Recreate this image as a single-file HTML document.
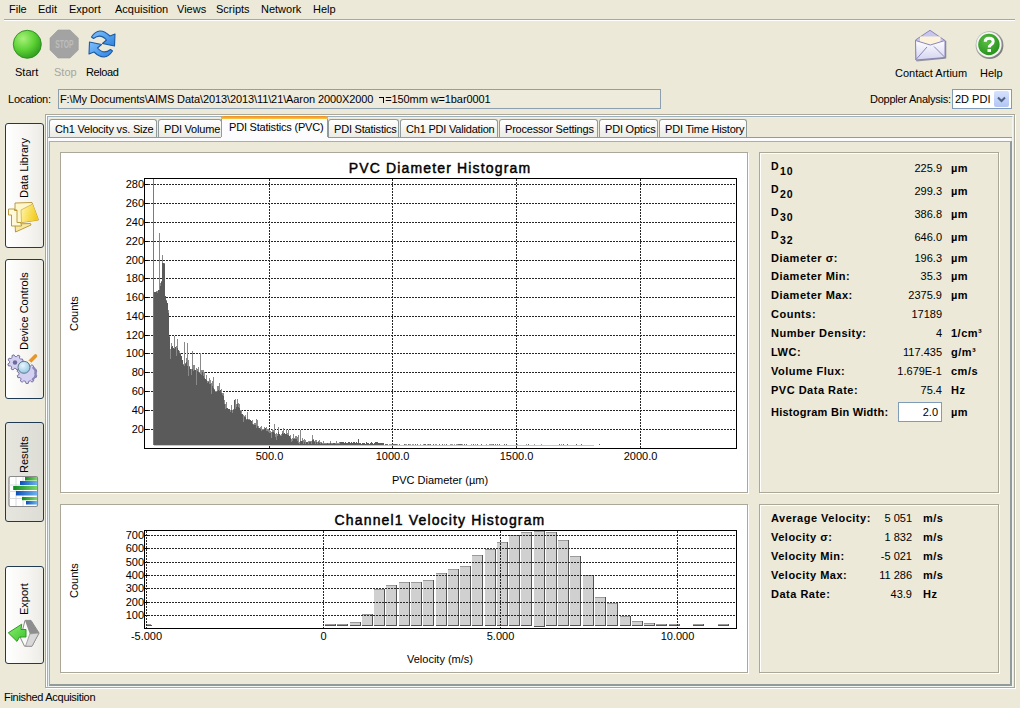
<!DOCTYPE html>
<html><head><meta charset="utf-8">
<style>
*{box-sizing:border-box}
html,body{margin:0;padding:0}
body{width:1020px;height:708px;background:#ECE9D8;position:relative;overflow:hidden;font-family:"Liberation Sans",sans-serif;font-size:11px;color:#000}
.a{position:absolute}
.t{position:absolute;line-height:13px;white-space:pre}
.b{font-weight:bold;letter-spacing:0.5px}
.sb{font-size:10.5px;letter-spacing:0.8px}
.dd{font-size:10.5px}
.ttl{font-size:14px;line-height:16px;letter-spacing:1.15px;-webkit-text-stroke:0.45px #000}
.etch{position:absolute;border:1px solid #ACA899;box-shadow:1px 1px 0 #fff, inset 1px 1px 0 #fff}
.lbtn{position:absolute;left:5px;width:39px;border:1px solid #1F3B53;border-radius:3px;background:linear-gradient(90deg,#FFFFFF 0%,#F6F5F1 60%,#ECEBE4 100%)}
.vt{position:absolute;transform-origin:0 0;transform:rotate(-90deg);white-space:pre;line-height:13px}
.tab{position:absolute;top:119px;height:18px;border:1px solid #919B9C;border-bottom:none;border-radius:3px 3px 0 0;background:linear-gradient(#FFFFFF,#F3F3EF 60%,#ECEBE5);}
.tab span{position:absolute;top:3px;left:5px;white-space:pre;line-height:13px;letter-spacing:-0.2px}
</style></head><body>

<!-- menu -->
<div class="t" style="left:9px;top:3px">File</div>
<div class="t" style="left:38px;top:3px">Edit</div>
<div class="t" style="left:69px;top:3px">Export</div>
<div class="t" style="left:115px;top:3px">Acquisition</div>
<div class="t" style="left:177px;top:3px">Views</div>
<div class="t" style="left:216px;top:3px">Scripts</div>
<div class="t" style="left:261px;top:3px">Network</div>
<div class="t" style="left:313px;top:3px">Help</div>
<div class="a" style="left:4px;top:19px;width:1011px;height:1px;background:#ACA899"></div>
<div class="a" style="left:4px;top:20px;width:1011px;height:1px;background:#fff"></div>

<!-- toolbar -->

<!-- icons -->
<svg class="a" style="left:0;top:0;z-index:5" width="1020" height="708">
<defs>
<radialGradient id="gStart" cx="0.35" cy="0.3" r="0.75"><stop offset="0" stop-color="#A8F07A"/><stop offset="0.55" stop-color="#5CD235"/><stop offset="1" stop-color="#2E9A1E"/></radialGradient>
<linearGradient id="gBlue" x1="0" y1="0" x2="1" y2="1"><stop offset="0" stop-color="#9ED0FF"/><stop offset="1" stop-color="#2F86E0"/></linearGradient>
<linearGradient id="gEnv" x1="0" y1="0" x2="0" y2="1"><stop offset="0" stop-color="#FFFFFF"/><stop offset="1" stop-color="#D4D4F2"/></linearGradient>
<radialGradient id="gHelp" cx="0.4" cy="0.35" r="0.7"><stop offset="0" stop-color="#5CC045"/><stop offset="1" stop-color="#24901A"/></radialGradient>
<linearGradient id="gFold" x1="0" y1="0" x2="1" y2="1"><stop offset="0" stop-color="#FFF6B8"/><stop offset="1" stop-color="#F2C91E"/></linearGradient>
<linearGradient id="gGreenBar" x1="0" y1="0" x2="1" y2="0"><stop offset="0" stop-color="#0E8A1E"/><stop offset="1" stop-color="#7ED66A"/></linearGradient>
<linearGradient id="gBlueBar" x1="0" y1="0" x2="1" y2="0"><stop offset="0" stop-color="#0A4FB8"/><stop offset="1" stop-color="#6EB2F0"/></linearGradient>
<linearGradient id="gArrow" x1="0" y1="0" x2="1" y2="1"><stop offset="0" stop-color="#8AF070"/><stop offset="1" stop-color="#3CC22E"/></linearGradient>
</defs>
<!-- start -->
<circle cx="27.3" cy="44.3" r="14" fill="url(#gStart)" stroke="#2F8A20" stroke-width="0.9"/>
<!-- stop -->
<polygon points="58,30 70,30 78.3,38 78.3,50 70,58 58,58 50,50 50,38" fill="#A3A3A3" stroke="#9C9C9C" stroke-width="0.6"/>
<text x="55.3" y="48.2" font-family="Liberation Sans" font-weight="bold" font-size="10.8" fill="#BDBDBD" textLength="18.3" lengthAdjust="spacingAndGlyphs">STOP</text>
<!-- reload -->
<defs><linearGradient id="gRel" x1="0" y1="0" x2="1" y2="1"><stop offset="0" stop-color="#7EC0FF"/><stop offset="1" stop-color="#2F82DE"/></linearGradient></defs>
<g transform="translate(84,26)" stroke="#1D5AA2" stroke-width="1.1" stroke-linejoin="round" fill="url(#gRel)">
<path d="M7.5,11 Q15,-0.5 26,10 L31,8 L30.5,20 L18.5,17.5 L22.5,14 Q16.5,7 9.5,12.5 Z"/>
<path d="M28.5,25 Q21,36.5 10,26 L5,28 L5.5,16 L17.5,18.5 L13.5,22 Q19.5,29 26.5,23.5 Z"/>
</g>
<!-- envelope -->
<g transform="translate(910,26)">
<path d="M5.5,14 L20,4.3 L35,14.5 L35,31.5 L6,34 Z" fill="#C9C6EE" stroke="#8A87B8" stroke-width="1"/>
<rect x="10" y="10.5" width="20.5" height="9" fill="#FDF3DA"/>
<path d="M5.5,14.5 L20.3,19 L35,14.5 L35,31.5 L6,34 Z" fill="url(#gEnv)" stroke="#8A87B8" stroke-width="1"/>
<path d="M6,33.5 L17,21 M34.5,31 L24,20.5" stroke="#8A87B8" stroke-width="1" fill="none"/>
<path d="M35.8,15 L35.8,32.2 L6.5,35" stroke="#707080" stroke-width="1" fill="none" opacity="0.7"/>
</g>
<!-- help -->
<defs><linearGradient id="gRing" x1="0" y1="0" x2="1" y2="1"><stop offset="0" stop-color="#C8C8C8"/><stop offset="1" stop-color="#6E6E6E"/></linearGradient></defs>
<circle cx="989.5" cy="45.2" r="13.9" fill="url(#gRing)"/>
<circle cx="989" cy="44.7" r="12.6" fill="#F4F4F0"/>
<circle cx="988.9" cy="44.5" r="10.7" fill="url(#gHelp)"/>
<path d="M985.2,41.8 Q985.2,38.3 989.2,38.3 Q993.2,38.3 993.2,41.6 Q993.2,43.6 991,44.8 Q989.2,45.8 989.2,47.6" fill="none" stroke="#fff" stroke-width="3"/><rect x="987.5" y="49" width="3.5" height="2.9" fill="#fff"/>
<!-- data library folders -->
<defs><linearGradient id="gFold2" x1="0" y1="0" x2="1" y2="0.3"><stop offset="0" stop-color="#FFF6B0"/><stop offset="1" stop-color="#F4CC1E"/></linearGradient></defs>
<g transform="translate(4,198)" stroke="#B3902E" stroke-width="0.9" stroke-linejoin="round">
<polygon points="11,26 26.5,25.5 27,27 11.5,34" fill="#F8E9A0"/>
<polygon points="4.5,11 10.5,11 10.5,12.5 14,12.5 17.5,28 7.5,28 7.5,17 4.5,17" fill="#FFF9DC"/>
<polygon points="11,5 28,4.5 34.5,22 17.5,24.5 13,24.5 13,12 11,12" fill="#FFF7CC"/>
<polygon points="17,12 28.5,6 34.5,22 17.5,24.3" fill="url(#gFold2)" stroke="none"/>
<path d="M17,12 L28.5,6 M17,12 L17.5,24.3" fill="none" stroke="#C9A640" stroke-width="0.7"/>
</g>
<!-- device controls gears -->
<g transform="translate(4,350)">
<path d="M17.38,13.69 L18.91,14.94 L17.97,16.86 L16.05,16.41 L14.82,17.50 L15.02,19.46 L12.99,20.16 L11.95,18.48 L10.31,18.38 L9.06,19.91 L7.14,18.97 L7.59,17.05 L6.50,15.82 L4.54,16.02 L3.84,13.99 L5.52,12.95 L5.62,11.31 L4.09,10.06 L5.03,8.14 L6.95,8.59 L8.18,7.50 L7.98,5.54 L10.01,4.84 L11.05,6.52 L12.69,6.62 L13.94,5.09 L15.86,6.03 L15.41,7.95 L16.50,9.18 L18.46,8.98 L19.16,11.01 L17.48,12.05 Z" fill="#D4D0F2" stroke="#77739F" stroke-width="1"/>
<circle cx="11" cy="12.5" r="2.2" fill="#6E6A98"/>
<path d="M30.96,24.30 L32.81,25.43 L32.15,27.52 L29.99,27.39 L28.97,28.82 L29.80,30.83 L28.04,32.14 L26.36,30.76 L24.70,31.32 L24.20,33.43 L22.00,33.45 L21.46,31.35 L19.78,30.82 L18.13,32.24 L16.34,30.96 L17.14,28.94 L16.09,27.53 L13.93,27.71 L13.23,25.63 L15.06,24.46 L15.04,22.70 L13.19,21.57 L13.85,19.48 L16.01,19.61 L17.03,18.18 L16.20,16.17 L17.96,14.86 L19.64,16.24 L21.30,15.68 L21.80,13.57 L24.00,13.55 L24.54,15.65 L26.22,16.18 L27.87,14.76 L29.66,16.04 L28.86,18.06 L29.91,19.47 L32.07,19.29 L32.77,21.37 L30.94,22.54 Z" fill="#D4D0F2" stroke="#77739F" stroke-width="1"/>
<path d="M29,17 A8,8 0 0 1 28,30" fill="none" stroke="#8A86B8" stroke-width="2"/>
<line x1="25" y1="12.5" x2="31.5" y2="6" stroke="#E8962A" stroke-width="3.6" stroke-linecap="round"/>
<line x1="24.5" y1="13" x2="26" y2="11.5" stroke="#F4F4F4" stroke-width="3.6"/>
<defs><radialGradient id="gLens" cx="0.4" cy="0.35" r="0.7"><stop offset="0" stop-color="#EAF6FC"/><stop offset="1" stop-color="#8EC4E4"/></radialGradient></defs>
<circle cx="20" cy="17.3" r="6" fill="url(#gLens)" stroke="#566E7C" stroke-width="0.9"/>
</g>
<!-- results chart icon -->
<g transform="translate(4,472)">
<rect x="5" y="4.5" width="28.5" height="30" rx="1.5" fill="#FFFFFF" stroke="#8A8A8A" stroke-width="1.2"/>
<path d="M12,5 V34 M19,5 V34 M5,13 H33 M5,19.5 H33 M5,26.5 H33" stroke="#D0D0D8" stroke-width="0.8"/>
<rect x="21" y="5" width="12" height="3.5" fill="url(#gGreenBar)"/>
<rect x="16" y="9" width="17" height="4" fill="url(#gBlueBar)"/>
<rect x="9.2" y="14" width="23.8" height="4" fill="url(#gGreenBar)"/>
<rect x="12" y="19" width="21" height="4.5" fill="url(#gBlueBar)"/>
<rect x="18" y="25" width="15" height="3.2" fill="url(#gGreenBar)"/>
<rect x="22" y="29" width="11" height="3.5" fill="url(#gBlueBar)"/>
</g>
<!-- export icon -->
<g transform="translate(4,614)">
<polygon points="21,6.4 27,6.4 35,19 28,32.2 20.5,32.2 16.5,24" fill="#FAFAFA" stroke="#7A7A7A" stroke-width="0.9" stroke-linejoin="round"/>
<polygon points="21,6.4 27,6.4 35,19 25.8,19.9" fill="#8E8E8E"/>
<polygon points="25.8,19.9 35,19 28,32.2 21.5,32.2" fill="#D8D8D8" stroke="#8A8A8A" stroke-width="0.7"/>
<polygon points="4.3,18.8 17.7,10.2 17,15.5 22,15.5 22,23 15.5,23 13,27.4" fill="url(#gArrow)" stroke="#2E9A22" stroke-width="1" stroke-linejoin="round"/>
</g>
</svg>

<div class="t" style="left:15px;top:66px">Start</div>
<div class="t" style="left:54px;top:66px;color:#A7A69E">Stop</div>
<div class="t" style="left:86px;top:66px;letter-spacing:-0.4px">Reload</div>
<div class="t" style="left:895px;top:67px">Contact Artium</div>
<div class="t" style="left:980px;top:67px">Help</div>

<!-- location -->
<div class="t" style="left:8px;top:93px;letter-spacing:-0.2px">Location:</div>
<div class="a" style="left:58px;top:89px;width:603px;height:20px;border:1px solid #8C9FAE;background:#EEEADC"></div>
<div class="t" style="left:60px;top:93px;letter-spacing:-0.1px">F:\My Documents\AIMS Data\2013\2013\11\21\Aaron 2000X2000  <span style="display:inline-block;width:5px;height:6px;border-top:1px solid #000;border-right:1px solid #000;margin-right:1px"></span>=150mm w=1bar0001</div>
<div class="t" style="left:870px;top:93px;letter-spacing:-0.25px">Doppler Analysis:</div>
<div class="a" style="left:952px;top:89px;width:60px;height:20px;border:1px solid #7F9DB9;background:#fff"></div>
<div class="t" style="left:955px;top:93px">2D PDI</div>
<div class="a" style="left:994px;top:91px;width:15px;height:16px;border-radius:2px;background:linear-gradient(#D6E2FD,#B2C6F4)"></div>
<svg class="a" style="left:994px;top:91px" width="15" height="16"><path d="M4,6.5 L7.5,10 L11,6.5" fill="none" stroke="#4D6185" stroke-width="2"/></svg>

<!-- left buttons -->
<div class="lbtn" style="top:123px;height:125px"></div>
<div class="lbtn" style="top:259px;height:140px"></div>
<div class="lbtn" style="top:422px;height:100px;background:linear-gradient(90deg,#E6E5DE,#DEDDD5)"></div>
<div class="lbtn" style="top:566px;height:98px"></div>
<div class="vt" style="left:18px;top:198px">Data Library</div>
<div class="vt" style="left:18px;top:350px">Device Controls</div>
<div class="vt" style="left:18px;top:473px">Results</div>
<div class="vt" style="left:18px;top:615px">Export</div>

<!-- frame -->
<div class="etch" style="left:45px;top:114px;width:970px;height:574px"></div>
<div class="a" style="left:47px;top:116px;width:966px;height:571px;border:1px solid #9CB0BE;border-right-color:#F4F6F2;border-bottom-color:#F4F6F2;box-shadow:inset 1px 1px 0 #E6F0F0"></div>

<!-- tabs -->
<div class="a" style="left:48px;top:137px;width:964px;height:1px;background:#919B9C"></div>
<div class="a" style="left:48px;top:138px;width:963px;height:3px;background:#FCFCFE"></div>
<div class="a" style="left:49px;top:141px;width:963px;height:545px;border:1px solid #9CB0BE;border-right:2px solid #919B9C;border-bottom:2px solid #919B9C;background:#ECE9D8"></div>

<div class="tab" style="left:49px;width:108px"><span>Ch1 Velocity vs. Size</span></div>
<div class="tab" style="left:158px;width:64px"><span>PDI Volume</span></div>
<div class="tab" style="left:328px;width:71px"><span>PDI Statistics</span></div>
<div class="tab" style="left:400px;width:98px"><span>Ch1 PDI Validation</span></div>
<div class="tab" style="left:499px;width:99px"><span>Processor Settings</span></div>
<div class="tab" style="left:599px;width:59px"><span>PDI Optics</span></div>
<div class="tab" style="left:659px;width:88px"><span>PDI Time History</span></div>
<div class="a" style="left:221px;top:116px;width:107px;height:22px;background:#FCFCFE;border:1px solid #919B9C;border-top:none;border-bottom:none;border-radius:3px 3px 0 0"></div>
<div class="a" style="left:221px;top:137px;width:107px;height:4px;background:#FCFCFE"></div>
<div class="a" style="left:221px;top:116px;width:107px;height:3px;background:linear-gradient(#E68B2C,#FFC73C);border-radius:3px 3px 0 0"></div>
<div class="t" style="left:229px;top:121px;letter-spacing:-0.2px">PDI Statistics (PVC)</div>

<!-- panels -->
<div class="etch" style="left:60px;top:152px;width:688px;height:341px;background:#fff"></div>
<div class="etch" style="left:759px;top:152px;width:240px;height:341px"></div>
<div class="etch" style="left:60px;top:504px;width:688px;height:169px;background:#fff"></div>
<div class="etch" style="left:759px;top:504px;width:240px;height:169px"></div>

<!-- stats -->
<div class="t b dd" style="left:771px;top:160px">D</div>
<div class="t b sb" style="left:780px;top:165px">10</div>
<div class="t" style="left:862px;width:80px;text-align:right;top:162px">225.9</div>
<div class="t b" style="left:951px;top:162px">µm</div>
<div class="t b dd" style="left:771px;top:183px">D</div>
<div class="t b sb" style="left:780px;top:188px">20</div>
<div class="t" style="left:862px;width:80px;text-align:right;top:185px">299.3</div>
<div class="t b" style="left:951px;top:185px">µm</div>
<div class="t b dd" style="left:771px;top:206px">D</div>
<div class="t b sb" style="left:780px;top:211px">30</div>
<div class="t" style="left:862px;width:80px;text-align:right;top:208px">386.8</div>
<div class="t b" style="left:951px;top:208px">µm</div>
<div class="t b dd" style="left:771px;top:229px">D</div>
<div class="t b sb" style="left:780px;top:234px">32</div>
<div class="t" style="left:862px;width:80px;text-align:right;top:231px">646.0</div>
<div class="t b" style="left:951px;top:231px">µm</div>
<div class="t b" style="left:771px;top:252px">Diameter σ:</div>
<div class="t" style="left:862px;width:80px;text-align:right;top:252px">196.3</div>
<div class="t b" style="left:951px;top:252px">µm</div>
<div class="t b" style="left:771px;top:270px">Diameter Min:</div>
<div class="t" style="left:862px;width:80px;text-align:right;top:270px">35.3</div>
<div class="t b" style="left:951px;top:270px">µm</div>
<div class="t b" style="left:771px;top:289px">Diameter Max:</div>
<div class="t" style="left:862px;width:80px;text-align:right;top:289px">2375.9</div>
<div class="t b" style="left:951px;top:289px">µm</div>
<div class="t b" style="left:771px;top:308px">Counts:</div>
<div class="t" style="left:862px;width:80px;text-align:right;top:308px">17189</div>
<div class="t b" style="left:771px;top:327px">Number Density:</div>
<div class="t" style="left:862px;width:80px;text-align:right;top:327px">4</div>
<div class="t b" style="left:951px;top:327px">1/cm³</div>
<div class="t b" style="left:771px;top:346px">LWC:</div>
<div class="t" style="left:862px;width:80px;text-align:right;top:346px">117.435</div>
<div class="t b" style="left:951px;top:346px">g/m³</div>
<div class="t b" style="left:771px;top:365px">Volume Flux:</div>
<div class="t" style="left:862px;width:80px;text-align:right;top:365px">1.679E-1</div>
<div class="t b" style="left:951px;top:365px">cm/s</div>
<div class="t b" style="left:771px;top:384px">PVC Data Rate:</div>
<div class="t" style="left:862px;width:80px;text-align:right;top:384px">75.4</div>
<div class="t b" style="left:951px;top:384px">Hz</div>
<div class="t b" style="left:771px;top:406px;letter-spacing:0.25px">Histogram Bin Width:</div>
<div class="a" style="left:898px;top:402px;width:44px;height:20px;border:1px solid #7F9DB9;background:#fff"></div>
<div class="t" style="left:862px;width:76px;text-align:right;top:406px">2.0</div>
<div class="t b" style="left:951px;top:406px">µm</div>
<div class="t b" style="left:771px;top:512px">Average Velocity:</div>
<div class="t" style="left:832px;width:80px;text-align:right;top:512px">5 051</div>
<div class="t b" style="left:923px;top:512px">m/s</div>
<div class="t b" style="left:771px;top:531px">Velocity σ:</div>
<div class="t" style="left:832px;width:80px;text-align:right;top:531px">1 832</div>
<div class="t b" style="left:923px;top:531px">m/s</div>
<div class="t b" style="left:771px;top:550px">Velocity Min:</div>
<div class="t" style="left:832px;width:80px;text-align:right;top:550px">-5 021</div>
<div class="t b" style="left:923px;top:550px">m/s</div>
<div class="t b" style="left:771px;top:569px">Velocity Max:</div>
<div class="t" style="left:832px;width:80px;text-align:right;top:569px">11 286</div>
<div class="t b" style="left:923px;top:569px">m/s</div>
<div class="t b" style="left:771px;top:588px">Data Rate:</div>
<div class="t" style="left:832px;width:80px;text-align:right;top:588px">43.9</div>
<div class="t b" style="left:923px;top:588px">Hz</div>

<!-- charts -->
<svg class="a" style="left:0;top:0" width="1020" height="708" shape-rendering="crispEdges">
<line x1="145" y1="429.5" x2="736" y2="429.5" stroke="#262626" stroke-dasharray="2,1"/>
<line x1="145" y1="429.5" x2="148" y2="429.5" stroke="#000"/>
<line x1="145" y1="410.5" x2="736" y2="410.5" stroke="#262626" stroke-dasharray="2,1"/>
<line x1="145" y1="410.5" x2="148" y2="410.5" stroke="#000"/>
<line x1="145" y1="391.5" x2="736" y2="391.5" stroke="#262626" stroke-dasharray="2,1"/>
<line x1="145" y1="391.5" x2="148" y2="391.5" stroke="#000"/>
<line x1="145" y1="372.5" x2="736" y2="372.5" stroke="#262626" stroke-dasharray="2,1"/>
<line x1="145" y1="372.5" x2="148" y2="372.5" stroke="#000"/>
<line x1="145" y1="353.5" x2="736" y2="353.5" stroke="#262626" stroke-dasharray="2,1"/>
<line x1="145" y1="353.5" x2="148" y2="353.5" stroke="#000"/>
<line x1="145" y1="335.5" x2="736" y2="335.5" stroke="#262626" stroke-dasharray="2,1"/>
<line x1="145" y1="335.5" x2="148" y2="335.5" stroke="#000"/>
<line x1="145" y1="316.5" x2="736" y2="316.5" stroke="#262626" stroke-dasharray="2,1"/>
<line x1="145" y1="316.5" x2="148" y2="316.5" stroke="#000"/>
<line x1="145" y1="297.5" x2="736" y2="297.5" stroke="#262626" stroke-dasharray="2,1"/>
<line x1="145" y1="297.5" x2="148" y2="297.5" stroke="#000"/>
<line x1="145" y1="278.5" x2="736" y2="278.5" stroke="#262626" stroke-dasharray="2,1"/>
<line x1="145" y1="278.5" x2="148" y2="278.5" stroke="#000"/>
<line x1="145" y1="260.5" x2="736" y2="260.5" stroke="#262626" stroke-dasharray="2,1"/>
<line x1="145" y1="260.5" x2="148" y2="260.5" stroke="#000"/>
<line x1="145" y1="241.5" x2="736" y2="241.5" stroke="#262626" stroke-dasharray="2,1"/>
<line x1="145" y1="241.5" x2="148" y2="241.5" stroke="#000"/>
<line x1="145" y1="222.5" x2="736" y2="222.5" stroke="#262626" stroke-dasharray="2,1"/>
<line x1="145" y1="222.5" x2="148" y2="222.5" stroke="#000"/>
<line x1="145" y1="203.5" x2="736" y2="203.5" stroke="#262626" stroke-dasharray="2,1"/>
<line x1="145" y1="203.5" x2="148" y2="203.5" stroke="#000"/>
<line x1="145" y1="184.5" x2="736" y2="184.5" stroke="#262626" stroke-dasharray="2,1"/>
<line x1="145" y1="184.5" x2="148" y2="184.5" stroke="#000"/>
<line x1="269.5" y1="179" x2="269.5" y2="448" stroke="#262626" stroke-dasharray="2,1"/>
<line x1="392.5" y1="179" x2="392.5" y2="448" stroke="#262626" stroke-dasharray="2,1"/>
<line x1="516.5" y1="179" x2="516.5" y2="448" stroke="#262626" stroke-dasharray="2,1"/>
<line x1="640.5" y1="179" x2="640.5" y2="448" stroke="#262626" stroke-dasharray="2,1"/>
<rect x="153" y="179" width="1" height="266" fill="#7A7A7A"/>
<rect x="154" y="292" width="1" height="153" fill="#5A5A5A"/>
<rect x="155" y="292" width="1" height="153" fill="#5A5A5A"/>
<rect x="156" y="291" width="1" height="1" fill="#8A8A8A"/>
<rect x="156" y="292" width="1" height="153" fill="#5A5A5A"/>
<rect x="157" y="291" width="1" height="2" fill="#8A8A8A"/>
<rect x="157" y="293" width="1" height="152" fill="#5A5A5A"/>
<rect x="158" y="290" width="1" height="155" fill="#5A5A5A"/>
<rect x="159" y="233" width="1" height="57" fill="#8A8A8A"/>
<rect x="159" y="290" width="1" height="155" fill="#5A5A5A"/>
<rect x="160" y="283" width="1" height="3" fill="#8A8A8A"/>
<rect x="160" y="286" width="1" height="159" fill="#5A5A5A"/>
<rect x="161" y="281" width="1" height="1" fill="#8A8A8A"/>
<rect x="161" y="282" width="1" height="163" fill="#5A5A5A"/>
<rect x="162" y="255" width="1" height="8" fill="#8A8A8A"/>
<rect x="162" y="263" width="1" height="182" fill="#5A5A5A"/>
<rect x="163" y="263" width="1" height="182" fill="#5A5A5A"/>
<rect x="164" y="263" width="1" height="1" fill="#8A8A8A"/>
<rect x="164" y="264" width="1" height="181" fill="#5A5A5A"/>
<rect x="165" y="296" width="1" height="149" fill="#5A5A5A"/>
<rect x="166" y="300" width="1" height="1" fill="#8A8A8A"/>
<rect x="166" y="301" width="1" height="144" fill="#5A5A5A"/>
<rect x="167" y="303" width="1" height="142" fill="#5A5A5A"/>
<rect x="168" y="310" width="1" height="3" fill="#8A8A8A"/>
<rect x="168" y="313" width="1" height="132" fill="#5A5A5A"/>
<rect x="169" y="336" width="1" height="1" fill="#8A8A8A"/>
<rect x="169" y="337" width="1" height="108" fill="#5A5A5A"/>
<rect x="170" y="349" width="1" height="10" fill="#8A8A8A"/>
<rect x="170" y="359" width="1" height="86" fill="#5A5A5A"/>
<rect x="171" y="343" width="1" height="4" fill="#8A8A8A"/>
<rect x="171" y="347" width="1" height="98" fill="#5A5A5A"/>
<rect x="172" y="346" width="1" height="99" fill="#5A5A5A"/>
<rect x="173" y="348" width="1" height="97" fill="#5A5A5A"/>
<rect x="174" y="336" width="1" height="13" fill="#8A8A8A"/>
<rect x="174" y="349" width="1" height="96" fill="#5A5A5A"/>
<rect x="175" y="347" width="1" height="98" fill="#5A5A5A"/>
<rect x="176" y="346" width="1" height="10" fill="#8A8A8A"/>
<rect x="176" y="356" width="1" height="89" fill="#5A5A5A"/>
<rect x="177" y="339" width="1" height="9" fill="#8A8A8A"/>
<rect x="177" y="348" width="1" height="97" fill="#5A5A5A"/>
<rect x="178" y="350" width="1" height="95" fill="#5A5A5A"/>
<rect x="179" y="351" width="1" height="2" fill="#8A8A8A"/>
<rect x="179" y="353" width="1" height="92" fill="#5A5A5A"/>
<rect x="180" y="353" width="1" height="1" fill="#8A8A8A"/>
<rect x="180" y="354" width="1" height="91" fill="#5A5A5A"/>
<rect x="181" y="356" width="1" height="89" fill="#5A5A5A"/>
<rect x="182" y="360" width="1" height="85" fill="#5A5A5A"/>
<rect x="183" y="364" width="1" height="1" fill="#8A8A8A"/>
<rect x="183" y="365" width="1" height="80" fill="#5A5A5A"/>
<rect x="184" y="342" width="1" height="24" fill="#8A8A8A"/>
<rect x="184" y="366" width="1" height="79" fill="#5A5A5A"/>
<rect x="185" y="363" width="1" height="1" fill="#8A8A8A"/>
<rect x="185" y="364" width="1" height="81" fill="#5A5A5A"/>
<rect x="186" y="358" width="1" height="4" fill="#8A8A8A"/>
<rect x="186" y="362" width="1" height="83" fill="#5A5A5A"/>
<rect x="187" y="343" width="1" height="23" fill="#8A8A8A"/>
<rect x="187" y="366" width="1" height="79" fill="#5A5A5A"/>
<rect x="188" y="360" width="1" height="16" fill="#8A8A8A"/>
<rect x="188" y="376" width="1" height="69" fill="#5A5A5A"/>
<rect x="189" y="366" width="1" height="1" fill="#8A8A8A"/>
<rect x="189" y="367" width="1" height="78" fill="#5A5A5A"/>
<rect x="190" y="369" width="1" height="76" fill="#5A5A5A"/>
<rect x="191" y="369" width="1" height="6" fill="#8A8A8A"/>
<rect x="191" y="375" width="1" height="70" fill="#5A5A5A"/>
<rect x="192" y="351" width="1" height="18" fill="#8A8A8A"/>
<rect x="192" y="369" width="1" height="76" fill="#5A5A5A"/>
<rect x="193" y="365" width="1" height="6" fill="#8A8A8A"/>
<rect x="193" y="371" width="1" height="74" fill="#5A5A5A"/>
<rect x="194" y="365" width="1" height="5" fill="#8A8A8A"/>
<rect x="194" y="370" width="1" height="75" fill="#5A5A5A"/>
<rect x="195" y="370" width="1" height="75" fill="#5A5A5A"/>
<rect x="196" y="368" width="1" height="17" fill="#8A8A8A"/>
<rect x="196" y="385" width="1" height="60" fill="#5A5A5A"/>
<rect x="197" y="369" width="1" height="2" fill="#8A8A8A"/>
<rect x="197" y="371" width="1" height="74" fill="#5A5A5A"/>
<rect x="198" y="367" width="1" height="5" fill="#8A8A8A"/>
<rect x="198" y="372" width="1" height="73" fill="#5A5A5A"/>
<rect x="199" y="372" width="1" height="1" fill="#8A8A8A"/>
<rect x="199" y="373" width="1" height="72" fill="#5A5A5A"/>
<rect x="200" y="353" width="1" height="21" fill="#8A8A8A"/>
<rect x="200" y="374" width="1" height="71" fill="#5A5A5A"/>
<rect x="201" y="370" width="1" height="5" fill="#8A8A8A"/>
<rect x="201" y="375" width="1" height="70" fill="#5A5A5A"/>
<rect x="202" y="370" width="1" height="2" fill="#8A8A8A"/>
<rect x="202" y="372" width="1" height="73" fill="#5A5A5A"/>
<rect x="203" y="370" width="1" height="6" fill="#8A8A8A"/>
<rect x="203" y="376" width="1" height="69" fill="#5A5A5A"/>
<rect x="204" y="372" width="1" height="6" fill="#8A8A8A"/>
<rect x="204" y="378" width="1" height="67" fill="#5A5A5A"/>
<rect x="205" y="379" width="1" height="66" fill="#5A5A5A"/>
<rect x="206" y="375" width="1" height="5" fill="#8A8A8A"/>
<rect x="206" y="380" width="1" height="65" fill="#5A5A5A"/>
<rect x="207" y="381" width="1" height="2" fill="#8A8A8A"/>
<rect x="207" y="383" width="1" height="62" fill="#5A5A5A"/>
<rect x="208" y="381" width="1" height="1" fill="#8A8A8A"/>
<rect x="208" y="382" width="1" height="63" fill="#5A5A5A"/>
<rect x="209" y="378" width="1" height="6" fill="#8A8A8A"/>
<rect x="209" y="384" width="1" height="61" fill="#5A5A5A"/>
<rect x="210" y="380" width="1" height="4" fill="#8A8A8A"/>
<rect x="210" y="384" width="1" height="61" fill="#5A5A5A"/>
<rect x="211" y="383" width="1" height="11" fill="#8A8A8A"/>
<rect x="211" y="394" width="1" height="51" fill="#5A5A5A"/>
<rect x="212" y="381" width="1" height="5" fill="#8A8A8A"/>
<rect x="212" y="386" width="1" height="59" fill="#5A5A5A"/>
<rect x="213" y="377" width="1" height="11" fill="#8A8A8A"/>
<rect x="213" y="388" width="1" height="57" fill="#5A5A5A"/>
<rect x="214" y="389" width="1" height="1" fill="#8A8A8A"/>
<rect x="214" y="390" width="1" height="55" fill="#5A5A5A"/>
<rect x="215" y="391" width="1" height="1" fill="#8A8A8A"/>
<rect x="215" y="392" width="1" height="53" fill="#5A5A5A"/>
<rect x="216" y="391" width="1" height="1" fill="#8A8A8A"/>
<rect x="216" y="392" width="1" height="53" fill="#5A5A5A"/>
<rect x="217" y="386" width="1" height="5" fill="#8A8A8A"/>
<rect x="217" y="391" width="1" height="54" fill="#5A5A5A"/>
<rect x="218" y="386" width="1" height="4" fill="#8A8A8A"/>
<rect x="218" y="390" width="1" height="55" fill="#5A5A5A"/>
<rect x="219" y="383" width="1" height="8" fill="#8A8A8A"/>
<rect x="219" y="391" width="1" height="54" fill="#5A5A5A"/>
<rect x="220" y="390" width="1" height="55" fill="#5A5A5A"/>
<rect x="221" y="389" width="1" height="4" fill="#8A8A8A"/>
<rect x="221" y="393" width="1" height="52" fill="#5A5A5A"/>
<rect x="222" y="393" width="1" height="2" fill="#8A8A8A"/>
<rect x="222" y="395" width="1" height="50" fill="#5A5A5A"/>
<rect x="223" y="393" width="1" height="3" fill="#8A8A8A"/>
<rect x="223" y="396" width="1" height="49" fill="#5A5A5A"/>
<rect x="224" y="400" width="1" height="4" fill="#8A8A8A"/>
<rect x="224" y="404" width="1" height="41" fill="#5A5A5A"/>
<rect x="225" y="404" width="1" height="5" fill="#8A8A8A"/>
<rect x="225" y="409" width="1" height="36" fill="#5A5A5A"/>
<rect x="226" y="402" width="1" height="6" fill="#8A8A8A"/>
<rect x="226" y="408" width="1" height="37" fill="#5A5A5A"/>
<rect x="227" y="408" width="1" height="37" fill="#5A5A5A"/>
<rect x="228" y="409" width="1" height="36" fill="#5A5A5A"/>
<rect x="229" y="409" width="1" height="36" fill="#5A5A5A"/>
<rect x="230" y="410" width="1" height="2" fill="#8A8A8A"/>
<rect x="230" y="412" width="1" height="33" fill="#5A5A5A"/>
<rect x="231" y="405" width="1" height="5" fill="#8A8A8A"/>
<rect x="231" y="410" width="1" height="35" fill="#5A5A5A"/>
<rect x="232" y="410" width="1" height="3" fill="#8A8A8A"/>
<rect x="232" y="413" width="1" height="32" fill="#5A5A5A"/>
<rect x="233" y="409" width="1" height="1" fill="#8A8A8A"/>
<rect x="233" y="410" width="1" height="35" fill="#5A5A5A"/>
<rect x="234" y="400" width="1" height="45" fill="#5A5A5A"/>
<rect x="235" y="399" width="1" height="10" fill="#8A8A8A"/>
<rect x="235" y="409" width="1" height="36" fill="#5A5A5A"/>
<rect x="236" y="404" width="1" height="3" fill="#8A8A8A"/>
<rect x="236" y="407" width="1" height="38" fill="#5A5A5A"/>
<rect x="237" y="399" width="1" height="5" fill="#8A8A8A"/>
<rect x="237" y="404" width="1" height="41" fill="#5A5A5A"/>
<rect x="238" y="403" width="1" height="4" fill="#8A8A8A"/>
<rect x="238" y="407" width="1" height="38" fill="#5A5A5A"/>
<rect x="239" y="404" width="1" height="4" fill="#8A8A8A"/>
<rect x="239" y="408" width="1" height="37" fill="#5A5A5A"/>
<rect x="240" y="410" width="1" height="1" fill="#8A8A8A"/>
<rect x="240" y="411" width="1" height="34" fill="#5A5A5A"/>
<rect x="241" y="410" width="1" height="4" fill="#8A8A8A"/>
<rect x="241" y="414" width="1" height="31" fill="#5A5A5A"/>
<rect x="242" y="414" width="1" height="31" fill="#5A5A5A"/>
<rect x="243" y="415" width="1" height="7" fill="#8A8A8A"/>
<rect x="243" y="422" width="1" height="23" fill="#5A5A5A"/>
<rect x="244" y="416" width="1" height="1" fill="#8A8A8A"/>
<rect x="244" y="417" width="1" height="28" fill="#5A5A5A"/>
<rect x="245" y="415" width="1" height="2" fill="#8A8A8A"/>
<rect x="245" y="417" width="1" height="28" fill="#5A5A5A"/>
<rect x="246" y="419" width="1" height="1" fill="#8A8A8A"/>
<rect x="246" y="420" width="1" height="25" fill="#5A5A5A"/>
<rect x="247" y="412" width="1" height="7" fill="#8A8A8A"/>
<rect x="247" y="419" width="1" height="26" fill="#5A5A5A"/>
<rect x="248" y="419" width="1" height="1" fill="#8A8A8A"/>
<rect x="248" y="420" width="1" height="25" fill="#5A5A5A"/>
<rect x="249" y="419" width="1" height="1" fill="#8A8A8A"/>
<rect x="249" y="420" width="1" height="25" fill="#5A5A5A"/>
<rect x="250" y="420" width="1" height="25" fill="#5A5A5A"/>
<rect x="251" y="421" width="1" height="24" fill="#5A5A5A"/>
<rect x="252" y="420" width="1" height="4" fill="#8A8A8A"/>
<rect x="252" y="424" width="1" height="21" fill="#5A5A5A"/>
<rect x="253" y="424" width="1" height="1" fill="#8A8A8A"/>
<rect x="253" y="425" width="1" height="20" fill="#5A5A5A"/>
<rect x="254" y="423" width="1" height="2" fill="#8A8A8A"/>
<rect x="254" y="425" width="1" height="20" fill="#5A5A5A"/>
<rect x="255" y="423" width="1" height="2" fill="#8A8A8A"/>
<rect x="255" y="425" width="1" height="20" fill="#5A5A5A"/>
<rect x="256" y="419" width="1" height="9" fill="#8A8A8A"/>
<rect x="256" y="428" width="1" height="17" fill="#5A5A5A"/>
<rect x="257" y="420" width="1" height="6" fill="#8A8A8A"/>
<rect x="257" y="426" width="1" height="19" fill="#5A5A5A"/>
<rect x="258" y="426" width="1" height="2" fill="#8A8A8A"/>
<rect x="258" y="428" width="1" height="17" fill="#5A5A5A"/>
<rect x="259" y="428" width="1" height="17" fill="#5A5A5A"/>
<rect x="260" y="427" width="1" height="2" fill="#8A8A8A"/>
<rect x="260" y="429" width="1" height="16" fill="#5A5A5A"/>
<rect x="261" y="426" width="1" height="5" fill="#8A8A8A"/>
<rect x="261" y="431" width="1" height="14" fill="#5A5A5A"/>
<rect x="262" y="429" width="1" height="1" fill="#8A8A8A"/>
<rect x="262" y="430" width="1" height="15" fill="#5A5A5A"/>
<rect x="263" y="429" width="1" height="1" fill="#8A8A8A"/>
<rect x="263" y="430" width="1" height="15" fill="#5A5A5A"/>
<rect x="264" y="427" width="1" height="2" fill="#8A8A8A"/>
<rect x="264" y="429" width="1" height="16" fill="#5A5A5A"/>
<rect x="265" y="428" width="1" height="17" fill="#5A5A5A"/>
<rect x="266" y="427" width="1" height="4" fill="#8A8A8A"/>
<rect x="266" y="431" width="1" height="14" fill="#5A5A5A"/>
<rect x="267" y="429" width="1" height="2" fill="#8A8A8A"/>
<rect x="267" y="431" width="1" height="14" fill="#5A5A5A"/>
<rect x="268" y="429" width="1" height="3" fill="#8A8A8A"/>
<rect x="268" y="432" width="1" height="13" fill="#5A5A5A"/>
<rect x="269" y="430" width="1" height="3" fill="#8A8A8A"/>
<rect x="269" y="433" width="1" height="12" fill="#5A5A5A"/>
<rect x="270" y="431" width="1" height="2" fill="#8A8A8A"/>
<rect x="270" y="433" width="1" height="12" fill="#5A5A5A"/>
<rect x="271" y="432" width="1" height="6" fill="#8A8A8A"/>
<rect x="271" y="438" width="1" height="7" fill="#5A5A5A"/>
<rect x="272" y="429" width="1" height="3" fill="#8A8A8A"/>
<rect x="272" y="432" width="1" height="13" fill="#5A5A5A"/>
<rect x="273" y="430" width="1" height="2" fill="#8A8A8A"/>
<rect x="273" y="432" width="1" height="13" fill="#5A5A5A"/>
<rect x="274" y="424" width="1" height="9" fill="#8A8A8A"/>
<rect x="274" y="433" width="1" height="12" fill="#5A5A5A"/>
<rect x="275" y="434" width="1" height="3" fill="#8A8A8A"/>
<rect x="275" y="437" width="1" height="8" fill="#5A5A5A"/>
<rect x="276" y="433" width="1" height="7" fill="#8A8A8A"/>
<rect x="276" y="440" width="1" height="5" fill="#5A5A5A"/>
<rect x="277" y="434" width="1" height="2" fill="#8A8A8A"/>
<rect x="277" y="436" width="1" height="9" fill="#5A5A5A"/>
<rect x="278" y="427" width="1" height="5" fill="#8A8A8A"/>
<rect x="278" y="432" width="1" height="13" fill="#5A5A5A"/>
<rect x="279" y="434" width="1" height="11" fill="#5A5A5A"/>
<rect x="280" y="435" width="1" height="1" fill="#8A8A8A"/>
<rect x="280" y="436" width="1" height="9" fill="#5A5A5A"/>
<rect x="281" y="434" width="1" height="2" fill="#8A8A8A"/>
<rect x="281" y="436" width="1" height="9" fill="#5A5A5A"/>
<rect x="282" y="431" width="1" height="2" fill="#8A8A8A"/>
<rect x="282" y="433" width="1" height="12" fill="#5A5A5A"/>
<rect x="283" y="428" width="1" height="6" fill="#8A8A8A"/>
<rect x="283" y="434" width="1" height="11" fill="#5A5A5A"/>
<rect x="284" y="433" width="1" height="12" fill="#5A5A5A"/>
<rect x="285" y="434" width="1" height="11" fill="#5A5A5A"/>
<rect x="286" y="429" width="1" height="5" fill="#8A8A8A"/>
<rect x="286" y="434" width="1" height="11" fill="#5A5A5A"/>
<rect x="287" y="433" width="1" height="2" fill="#8A8A8A"/>
<rect x="287" y="435" width="1" height="10" fill="#5A5A5A"/>
<rect x="288" y="430" width="1" height="5" fill="#8A8A8A"/>
<rect x="288" y="435" width="1" height="10" fill="#5A5A5A"/>
<rect x="289" y="436" width="1" height="9" fill="#5A5A5A"/>
<rect x="290" y="435" width="1" height="3" fill="#8A8A8A"/>
<rect x="290" y="438" width="1" height="7" fill="#5A5A5A"/>
<rect x="291" y="439" width="1" height="3" fill="#8A8A8A"/>
<rect x="291" y="442" width="1" height="3" fill="#5A5A5A"/>
<rect x="292" y="438" width="1" height="3" fill="#8A8A8A"/>
<rect x="292" y="441" width="1" height="4" fill="#5A5A5A"/>
<rect x="293" y="434" width="1" height="5" fill="#8A8A8A"/>
<rect x="293" y="439" width="1" height="6" fill="#5A5A5A"/>
<rect x="294" y="438" width="1" height="1" fill="#8A8A8A"/>
<rect x="294" y="439" width="1" height="6" fill="#5A5A5A"/>
<rect x="295" y="436" width="1" height="3" fill="#8A8A8A"/>
<rect x="295" y="439" width="1" height="6" fill="#5A5A5A"/>
<rect x="296" y="436" width="1" height="3" fill="#8A8A8A"/>
<rect x="296" y="439" width="1" height="6" fill="#5A5A5A"/>
<rect x="297" y="437" width="1" height="4" fill="#8A8A8A"/>
<rect x="297" y="441" width="1" height="4" fill="#5A5A5A"/>
<rect x="298" y="435" width="1" height="8" fill="#8A8A8A"/>
<rect x="298" y="443" width="1" height="2" fill="#5A5A5A"/>
<rect x="299" y="442" width="1" height="2" fill="#8A8A8A"/>
<rect x="299" y="444" width="1" height="1" fill="#5A5A5A"/>
<rect x="300" y="430" width="1" height="11" fill="#8A8A8A"/>
<rect x="300" y="441" width="1" height="4" fill="#5A5A5A"/>
<rect x="301" y="441" width="1" height="4" fill="#5A5A5A"/>
<rect x="302" y="438" width="1" height="3" fill="#8A8A8A"/>
<rect x="302" y="441" width="1" height="4" fill="#5A5A5A"/>
<rect x="303" y="440" width="1" height="4" fill="#8A8A8A"/>
<rect x="303" y="444" width="1" height="1" fill="#5A5A5A"/>
<rect x="304" y="439" width="1" height="3" fill="#8A8A8A"/>
<rect x="304" y="442" width="1" height="3" fill="#5A5A5A"/>
<rect x="305" y="440" width="1" height="4" fill="#8A8A8A"/>
<rect x="305" y="444" width="1" height="1" fill="#5A5A5A"/>
<rect x="306" y="442" width="1" height="3" fill="#5A5A5A"/>
<rect x="307" y="442" width="1" height="3" fill="#5A5A5A"/>
<rect x="308" y="441" width="1" height="3" fill="#8A8A8A"/>
<rect x="308" y="444" width="1" height="1" fill="#5A5A5A"/>
<rect x="309" y="441" width="1" height="1" fill="#8A8A8A"/>
<rect x="309" y="442" width="1" height="3" fill="#5A5A5A"/>
<rect x="310" y="441" width="1" height="1" fill="#8A8A8A"/>
<rect x="310" y="442" width="1" height="3" fill="#5A5A5A"/>
<rect x="311" y="441" width="1" height="3" fill="#8A8A8A"/>
<rect x="311" y="444" width="1" height="1" fill="#5A5A5A"/>
<rect x="312" y="435" width="1" height="5" fill="#8A8A8A"/>
<rect x="312" y="440" width="1" height="5" fill="#5A5A5A"/>
<rect x="313" y="439" width="1" height="1" fill="#8A8A8A"/>
<rect x="313" y="440" width="1" height="5" fill="#5A5A5A"/>
<rect x="314" y="441" width="1" height="1" fill="#8A8A8A"/>
<rect x="314" y="442" width="1" height="3" fill="#5A5A5A"/>
<rect x="315" y="440" width="1" height="4" fill="#8A8A8A"/>
<rect x="315" y="444" width="1" height="1" fill="#5A5A5A"/>
<rect x="316" y="440" width="1" height="2" fill="#8A8A8A"/>
<rect x="316" y="442" width="1" height="3" fill="#5A5A5A"/>
<rect x="317" y="442" width="1" height="2" fill="#8A8A8A"/>
<rect x="317" y="444" width="1" height="1" fill="#5A5A5A"/>
<rect x="318" y="441" width="1" height="1" fill="#8A8A8A"/>
<rect x="318" y="442" width="1" height="3" fill="#5A5A5A"/>
<rect x="319" y="440" width="1" height="3" fill="#8A8A8A"/>
<rect x="319" y="443" width="1" height="2" fill="#5A5A5A"/>
<rect x="320" y="442" width="1" height="2" fill="#8A8A8A"/>
<rect x="320" y="444" width="1" height="1" fill="#5A5A5A"/>
<rect x="321" y="442" width="1" height="1" fill="#8A8A8A"/>
<rect x="321" y="443" width="1" height="2" fill="#5A5A5A"/>
<rect x="322" y="443" width="1" height="1" fill="#8A8A8A"/>
<rect x="322" y="444" width="1" height="1" fill="#5A5A5A"/>
<rect x="323" y="441" width="1" height="3" fill="#8A8A8A"/>
<rect x="323" y="444" width="1" height="1" fill="#5A5A5A"/>
<rect x="324" y="443" width="1" height="1" fill="#8A8A8A"/>
<rect x="324" y="444" width="1" height="1" fill="#5A5A5A"/>
<rect x="325" y="443" width="1" height="1" fill="#8A8A8A"/>
<rect x="325" y="444" width="1" height="1" fill="#5A5A5A"/>
<rect x="326" y="443" width="1" height="1" fill="#8A8A8A"/>
<rect x="326" y="444" width="1" height="1" fill="#5A5A5A"/>
<rect x="327" y="443" width="1" height="2" fill="#5A5A5A"/>
<rect x="328" y="443" width="1" height="1" fill="#8A8A8A"/>
<rect x="328" y="444" width="1" height="1" fill="#5A5A5A"/>
<rect x="329" y="443" width="1" height="1" fill="#8A8A8A"/>
<rect x="329" y="444" width="1" height="1" fill="#5A5A5A"/>
<rect x="330" y="441" width="1" height="2" fill="#8A8A8A"/>
<rect x="330" y="443" width="1" height="2" fill="#5A5A5A"/>
<rect x="331" y="443" width="1" height="1" fill="#8A8A8A"/>
<rect x="331" y="444" width="1" height="1" fill="#5A5A5A"/>
<rect x="332" y="443" width="1" height="1" fill="#8A8A8A"/>
<rect x="332" y="444" width="1" height="1" fill="#5A5A5A"/>
<rect x="333" y="443" width="1" height="2" fill="#5A5A5A"/>
<rect x="334" y="443" width="1" height="2" fill="#5A5A5A"/>
<rect x="335" y="443" width="1" height="1" fill="#8A8A8A"/>
<rect x="335" y="444" width="1" height="1" fill="#5A5A5A"/>
<rect x="336" y="441" width="1" height="3" fill="#8A8A8A"/>
<rect x="336" y="444" width="1" height="1" fill="#5A5A5A"/>
<rect x="337" y="443" width="1" height="1" fill="#8A8A8A"/>
<rect x="337" y="444" width="1" height="1" fill="#5A5A5A"/>
<rect x="338" y="443" width="1" height="1" fill="#8A8A8A"/>
<rect x="338" y="444" width="1" height="1" fill="#5A5A5A"/>
<rect x="339" y="442" width="1" height="2" fill="#8A8A8A"/>
<rect x="339" y="444" width="1" height="1" fill="#5A5A5A"/>
<rect x="340" y="442" width="1" height="3" fill="#5A5A5A"/>
<rect x="341" y="442" width="1" height="3" fill="#5A5A5A"/>
<rect x="342" y="442" width="1" height="3" fill="#5A5A5A"/>
<rect x="343" y="442" width="1" height="3" fill="#5A5A5A"/>
<rect x="344" y="443" width="1" height="2" fill="#5A5A5A"/>
<rect x="345" y="442" width="1" height="3" fill="#5A5A5A"/>
<rect x="346" y="443" width="1" height="2" fill="#5A5A5A"/>
<rect x="347" y="443" width="1" height="2" fill="#5A5A5A"/>
<rect x="348" y="442" width="1" height="3" fill="#5A5A5A"/>
<rect x="349" y="442" width="1" height="3" fill="#5A5A5A"/>
<rect x="350" y="443" width="1" height="2" fill="#5A5A5A"/>
<rect x="351" y="442" width="1" height="3" fill="#5A5A5A"/>
<rect x="352" y="443" width="1" height="2" fill="#5A5A5A"/>
<rect x="353" y="442" width="1" height="3" fill="#5A5A5A"/>
<rect x="354" y="442" width="1" height="3" fill="#5A5A5A"/>
<rect x="355" y="443" width="1" height="2" fill="#5A5A5A"/>
<rect x="356" y="442" width="1" height="3" fill="#5A5A5A"/>
<rect x="357" y="443" width="1" height="2" fill="#5A5A5A"/>
<rect x="358" y="439" width="1" height="6" fill="#5A5A5A"/>
<rect x="359" y="443" width="1" height="2" fill="#5A5A5A"/>
<rect x="360" y="443" width="1" height="2" fill="#5A5A5A"/>
<rect x="361" y="444" width="1" height="1" fill="#5A5A5A"/>
<rect x="362" y="443" width="1" height="2" fill="#5A5A5A"/>
<rect x="363" y="443" width="1" height="2" fill="#5A5A5A"/>
<rect x="364" y="443" width="1" height="2" fill="#5A5A5A"/>
<rect x="365" y="444" width="1" height="1" fill="#5A5A5A"/>
<rect x="366" y="442" width="1" height="3" fill="#5A5A5A"/>
<rect x="367" y="443" width="1" height="2" fill="#5A5A5A"/>
<rect x="368" y="443" width="1" height="2" fill="#5A5A5A"/>
<rect x="369" y="444" width="1" height="1" fill="#5A5A5A"/>
<rect x="370" y="443" width="1" height="2" fill="#5A5A5A"/>
<rect x="371" y="442" width="1" height="3" fill="#5A5A5A"/>
<rect x="372" y="443" width="1" height="2" fill="#5A5A5A"/>
<rect x="373" y="444" width="1" height="1" fill="#5A5A5A"/>
<rect x="374" y="443" width="1" height="2" fill="#5A5A5A"/>
<rect x="375" y="442" width="1" height="3" fill="#5A5A5A"/>
<rect x="376" y="442" width="1" height="3" fill="#5A5A5A"/>
<rect x="377" y="442" width="1" height="3" fill="#5A5A5A"/>
<rect x="378" y="443" width="1" height="2" fill="#5A5A5A"/>
<rect x="379" y="443" width="1" height="2" fill="#5A5A5A"/>
<rect x="380" y="443" width="1" height="2" fill="#5A5A5A"/>
<rect x="381" y="443" width="1" height="2" fill="#5A5A5A"/>
<rect x="382" y="443" width="1" height="2" fill="#5A5A5A"/>
<rect x="383" y="443" width="1" height="2" fill="#5A5A5A"/>
<rect x="385" y="444" width="1" height="1" fill="#6A6A6A"/>
<rect x="386" y="444" width="1" height="1" fill="#6A6A6A"/>
<rect x="387" y="444" width="1" height="1" fill="#6A6A6A"/>
<rect x="389" y="444" width="1" height="1" fill="#9A9A9A"/>
<rect x="390" y="444" width="1" height="1" fill="#9A9A9A"/>
<rect x="391" y="444" width="1" height="1" fill="#9A9A9A"/>
<rect x="392" y="444" width="1" height="1" fill="#6A6A6A"/>
<rect x="393" y="444" width="1" height="1" fill="#6A6A6A"/>
<rect x="394" y="444" width="1" height="1" fill="#6A6A6A"/>
<rect x="395" y="444" width="1" height="1" fill="#6A6A6A"/>
<rect x="396" y="444" width="1" height="1" fill="#6A6A6A"/>
<rect x="397" y="444" width="1" height="1" fill="#9A9A9A"/>
<rect x="399" y="444" width="1" height="1" fill="#6A6A6A"/>
<rect x="404" y="444" width="1" height="1" fill="#6A6A6A"/>
<rect x="405" y="444" width="1" height="1" fill="#9A9A9A"/>
<rect x="406" y="444" width="1" height="1" fill="#9A9A9A"/>
<rect x="408" y="444" width="1" height="1" fill="#6A6A6A"/>
<rect x="409" y="444" width="1" height="1" fill="#9A9A9A"/>
<rect x="410" y="444" width="1" height="1" fill="#9A9A9A"/>
<rect x="412" y="444" width="1" height="1" fill="#9A9A9A"/>
<rect x="413" y="444" width="1" height="1" fill="#9A9A9A"/>
<rect x="415" y="444" width="1" height="1" fill="#6A6A6A"/>
<rect x="417" y="444" width="1" height="1" fill="#6A6A6A"/>
<rect x="420" y="444" width="1" height="1" fill="#9A9A9A"/>
<rect x="423" y="444" width="1" height="1" fill="#9A9A9A"/>
<rect x="424" y="444" width="1" height="1" fill="#6A6A6A"/>
<rect x="425" y="444" width="1" height="1" fill="#6A6A6A"/>
<rect x="427" y="444" width="1" height="1" fill="#9A9A9A"/>
<rect x="428" y="444" width="1" height="1" fill="#6A6A6A"/>
<rect x="429" y="444" width="1" height="1" fill="#9A9A9A"/>
<rect x="430" y="444" width="1" height="1" fill="#6A6A6A"/>
<rect x="433" y="444" width="1" height="1" fill="#6A6A6A"/>
<rect x="435" y="444" width="1" height="1" fill="#9A9A9A"/>
<rect x="436" y="444" width="1" height="1" fill="#9A9A9A"/>
<rect x="439" y="444" width="1" height="1" fill="#6A6A6A"/>
<rect x="442" y="444" width="1" height="1" fill="#6A6A6A"/>
<rect x="444" y="444" width="1" height="1" fill="#9A9A9A"/>
<rect x="446" y="444" width="1" height="1" fill="#6A6A6A"/>
<rect x="450" y="444" width="1" height="1" fill="#9A9A9A"/>
<rect x="451" y="444" width="1" height="1" fill="#9A9A9A"/>
<rect x="452" y="444" width="1" height="1" fill="#9A9A9A"/>
<rect x="454" y="444" width="1" height="1" fill="#9A9A9A"/>
<rect x="456" y="444" width="1" height="1" fill="#9A9A9A"/>
<rect x="457" y="444" width="1" height="1" fill="#9A9A9A"/>
<rect x="458" y="444" width="1" height="1" fill="#6A6A6A"/>
<rect x="459" y="444" width="1" height="1" fill="#6A6A6A"/>
<rect x="460" y="444" width="1" height="1" fill="#6A6A6A"/>
<rect x="461" y="444" width="1" height="1" fill="#6A6A6A"/>
<rect x="462" y="444" width="1" height="1" fill="#9A9A9A"/>
<rect x="464" y="444" width="1" height="1" fill="#6A6A6A"/>
<rect x="466" y="444" width="1" height="1" fill="#6A6A6A"/>
<rect x="471" y="444" width="1" height="1" fill="#9A9A9A"/>
<rect x="473" y="444" width="1" height="1" fill="#6A6A6A"/>
<rect x="475" y="444" width="1" height="1" fill="#9A9A9A"/>
<rect x="477" y="444" width="1" height="1" fill="#6A6A6A"/>
<rect x="481" y="444" width="1" height="1" fill="#6A6A6A"/>
<rect x="486" y="444" width="1" height="1" fill="#9A9A9A"/>
<rect x="489" y="444" width="1" height="1" fill="#9A9A9A"/>
<rect x="490" y="444" width="1" height="1" fill="#9A9A9A"/>
<rect x="491" y="444" width="1" height="1" fill="#9A9A9A"/>
<rect x="492" y="444" width="1" height="1" fill="#9A9A9A"/>
<rect x="493" y="444" width="1" height="1" fill="#6A6A6A"/>
<rect x="495" y="444" width="1" height="1" fill="#6A6A6A"/>
<rect x="497" y="444" width="1" height="1" fill="#6A6A6A"/>
<rect x="499" y="444" width="1" height="1" fill="#6A6A6A"/>
<rect x="504" y="444" width="1" height="1" fill="#6A6A6A"/>
<rect x="506" y="444" width="1" height="1" fill="#6A6A6A"/>
<rect x="517" y="444" width="1" height="1" fill="#9A9A9A"/>
<rect x="526" y="444" width="1" height="1" fill="#9A9A9A"/>
<rect x="528" y="444" width="1" height="1" fill="#6A6A6A"/>
<rect x="534" y="444" width="1" height="1" fill="#9A9A9A"/>
<rect x="541" y="444" width="1" height="1" fill="#9A9A9A"/>
<rect x="559" y="444" width="1" height="1" fill="#6A6A6A"/>
<rect x="561" y="444" width="1" height="1" fill="#9A9A9A"/>
<rect x="563" y="444" width="1" height="1" fill="#6A6A6A"/>
<rect x="567" y="444" width="1" height="1" fill="#6A6A6A"/>
<rect x="576" y="444" width="1" height="1" fill="#6A6A6A"/>
<rect x="581" y="444" width="1" height="1" fill="#6A6A6A"/>
<rect x="599" y="444" width="1" height="1" fill="#6A6A6A"/>
<rect x="154" y="445" width="440" height="1" fill="#C8C8C8"/>
<rect x="144.5" y="178.5" width="592" height="270" fill="none" stroke="#000"/>
</svg>
<div class="t" style="left:84px;width:60px;text-align:right;top:423px">20</div>
<div class="t" style="left:84px;width:60px;text-align:right;top:404px">40</div>
<div class="t" style="left:84px;width:60px;text-align:right;top:385px">60</div>
<div class="t" style="left:84px;width:60px;text-align:right;top:366px">80</div>
<div class="t" style="left:84px;width:60px;text-align:right;top:347px">100</div>
<div class="t" style="left:84px;width:60px;text-align:right;top:329px">120</div>
<div class="t" style="left:84px;width:60px;text-align:right;top:310px">140</div>
<div class="t" style="left:84px;width:60px;text-align:right;top:291px">160</div>
<div class="t" style="left:84px;width:60px;text-align:right;top:272px">180</div>
<div class="t" style="left:84px;width:60px;text-align:right;top:254px">200</div>
<div class="t" style="left:84px;width:60px;text-align:right;top:235px">220</div>
<div class="t" style="left:84px;width:60px;text-align:right;top:216px">240</div>
<div class="t" style="left:84px;width:60px;text-align:right;top:197px">260</div>
<div class="t" style="left:84px;width:60px;text-align:right;top:178px">280</div>
<div class="t" style="left:229px;width:81px;text-align:center;top:450px">500.0</div>
<div class="t" style="left:352px;width:81px;text-align:center;top:450px">1000.0</div>
<div class="t" style="left:476px;width:81px;text-align:center;top:450px">1500.0</div>
<div class="t" style="left:600px;width:81px;text-align:center;top:450px">2000.0</div>
<div class="t" style="left:144px;width:592px;text-align:center;top:474px">PVC Diameter (µm)</div>
<div class="t ttl" style="left:144px;width:592px;text-align:center;top:160px">PVC Diameter Histogram</div>
<div class="vt" style="left:68px;top:331px">Counts</div>
<svg class="a" style="left:0;top:0" width="1020" height="708" shape-rendering="crispEdges">
<rect x="325" y="624" width="10" height="1" fill="#D0D0D0"/>
<rect x="325" y="624" width="10" height="1" fill="#9A9A9A"/>
<rect x="335" y="624" width="1" height="2" fill="#555"/>
<rect x="325" y="625" width="11" height="1" fill="#555"/>
<rect x="337" y="624" width="10" height="1" fill="#D0D0D0"/>
<rect x="337" y="624" width="10" height="1" fill="#9A9A9A"/>
<rect x="347" y="624" width="1" height="2" fill="#555"/>
<rect x="337" y="625" width="11" height="1" fill="#555"/>
<rect x="350" y="622" width="10" height="3" fill="#D0D0D0"/>
<rect x="350" y="622" width="10" height="1" fill="#9A9A9A"/>
<rect x="360" y="622" width="1" height="4" fill="#555"/>
<rect x="350" y="625" width="11" height="1" fill="#555"/>
<rect x="362" y="614" width="10" height="11" fill="#D0D0D0"/>
<rect x="362" y="614" width="10" height="1" fill="#9A9A9A"/>
<rect x="372" y="614" width="1" height="12" fill="#555"/>
<rect x="362" y="625" width="11" height="1" fill="#555"/>
<rect x="374" y="589" width="10" height="36" fill="#D0D0D0"/>
<rect x="374" y="589" width="10" height="1" fill="#9A9A9A"/>
<rect x="384" y="589" width="1" height="37" fill="#555"/>
<rect x="374" y="625" width="11" height="1" fill="#555"/>
<rect x="386" y="585" width="10" height="40" fill="#D0D0D0"/>
<rect x="386" y="585" width="10" height="1" fill="#9A9A9A"/>
<rect x="396" y="585" width="1" height="41" fill="#555"/>
<rect x="386" y="625" width="11" height="1" fill="#555"/>
<rect x="399" y="582" width="10" height="43" fill="#D0D0D0"/>
<rect x="399" y="582" width="10" height="1" fill="#9A9A9A"/>
<rect x="409" y="582" width="1" height="44" fill="#555"/>
<rect x="399" y="625" width="11" height="1" fill="#555"/>
<rect x="411" y="582" width="10" height="43" fill="#D0D0D0"/>
<rect x="411" y="582" width="10" height="1" fill="#9A9A9A"/>
<rect x="421" y="582" width="1" height="44" fill="#555"/>
<rect x="411" y="625" width="11" height="1" fill="#555"/>
<rect x="423" y="580" width="10" height="45" fill="#D0D0D0"/>
<rect x="423" y="580" width="10" height="1" fill="#9A9A9A"/>
<rect x="433" y="580" width="1" height="46" fill="#555"/>
<rect x="423" y="625" width="11" height="1" fill="#555"/>
<rect x="436" y="573" width="10" height="52" fill="#D0D0D0"/>
<rect x="436" y="573" width="10" height="1" fill="#9A9A9A"/>
<rect x="446" y="573" width="1" height="53" fill="#555"/>
<rect x="436" y="625" width="11" height="1" fill="#555"/>
<rect x="448" y="569" width="10" height="56" fill="#D0D0D0"/>
<rect x="448" y="569" width="10" height="1" fill="#9A9A9A"/>
<rect x="458" y="569" width="1" height="57" fill="#555"/>
<rect x="448" y="625" width="11" height="1" fill="#555"/>
<rect x="460" y="566" width="10" height="59" fill="#D0D0D0"/>
<rect x="460" y="566" width="10" height="1" fill="#9A9A9A"/>
<rect x="470" y="566" width="1" height="60" fill="#555"/>
<rect x="460" y="625" width="11" height="1" fill="#555"/>
<rect x="472" y="555" width="10" height="70" fill="#D0D0D0"/>
<rect x="472" y="555" width="10" height="1" fill="#9A9A9A"/>
<rect x="482" y="555" width="1" height="71" fill="#555"/>
<rect x="472" y="625" width="11" height="1" fill="#555"/>
<rect x="485" y="549" width="10" height="76" fill="#D0D0D0"/>
<rect x="485" y="549" width="10" height="1" fill="#9A9A9A"/>
<rect x="495" y="549" width="1" height="77" fill="#555"/>
<rect x="485" y="625" width="11" height="1" fill="#555"/>
<rect x="497" y="542" width="10" height="83" fill="#D0D0D0"/>
<rect x="497" y="542" width="10" height="1" fill="#9A9A9A"/>
<rect x="507" y="542" width="1" height="84" fill="#555"/>
<rect x="497" y="625" width="11" height="1" fill="#555"/>
<rect x="509" y="535" width="10" height="90" fill="#D0D0D0"/>
<rect x="509" y="535" width="10" height="1" fill="#9A9A9A"/>
<rect x="519" y="535" width="1" height="91" fill="#555"/>
<rect x="509" y="625" width="11" height="1" fill="#555"/>
<rect x="521" y="532" width="10" height="93" fill="#D0D0D0"/>
<rect x="521" y="532" width="10" height="1" fill="#9A9A9A"/>
<rect x="531" y="532" width="1" height="94" fill="#555"/>
<rect x="521" y="625" width="11" height="1" fill="#555"/>
<rect x="534" y="531" width="10" height="95" fill="#D0D0D0"/>
<rect x="534" y="531" width="10" height="1" fill="#9A9A9A"/>
<rect x="544" y="531" width="1" height="96" fill="#555"/>
<rect x="534" y="626" width="11" height="1" fill="#555"/>
<rect x="546" y="532" width="10" height="93" fill="#D0D0D0"/>
<rect x="546" y="532" width="10" height="1" fill="#9A9A9A"/>
<rect x="556" y="532" width="1" height="94" fill="#555"/>
<rect x="546" y="625" width="11" height="1" fill="#555"/>
<rect x="558" y="540" width="10" height="85" fill="#D0D0D0"/>
<rect x="558" y="540" width="10" height="1" fill="#9A9A9A"/>
<rect x="568" y="540" width="1" height="86" fill="#555"/>
<rect x="558" y="625" width="11" height="1" fill="#555"/>
<rect x="570" y="556" width="10" height="69" fill="#D0D0D0"/>
<rect x="570" y="556" width="10" height="1" fill="#9A9A9A"/>
<rect x="580" y="556" width="1" height="70" fill="#555"/>
<rect x="570" y="625" width="11" height="1" fill="#555"/>
<rect x="583" y="575" width="10" height="50" fill="#D0D0D0"/>
<rect x="583" y="575" width="10" height="1" fill="#9A9A9A"/>
<rect x="593" y="575" width="1" height="51" fill="#555"/>
<rect x="583" y="625" width="11" height="1" fill="#555"/>
<rect x="595" y="597" width="10" height="28" fill="#D0D0D0"/>
<rect x="595" y="597" width="10" height="1" fill="#9A9A9A"/>
<rect x="605" y="597" width="1" height="29" fill="#555"/>
<rect x="595" y="625" width="11" height="1" fill="#555"/>
<rect x="607" y="603" width="10" height="22" fill="#D0D0D0"/>
<rect x="607" y="603" width="10" height="1" fill="#9A9A9A"/>
<rect x="617" y="603" width="1" height="23" fill="#555"/>
<rect x="607" y="625" width="11" height="1" fill="#555"/>
<rect x="620" y="616" width="10" height="9" fill="#D0D0D0"/>
<rect x="620" y="616" width="10" height="1" fill="#9A9A9A"/>
<rect x="630" y="616" width="1" height="10" fill="#555"/>
<rect x="620" y="625" width="11" height="1" fill="#555"/>
<rect x="632" y="621" width="10" height="4" fill="#D0D0D0"/>
<rect x="632" y="621" width="10" height="1" fill="#9A9A9A"/>
<rect x="642" y="621" width="1" height="5" fill="#555"/>
<rect x="632" y="625" width="11" height="1" fill="#555"/>
<rect x="644" y="623" width="10" height="2" fill="#D0D0D0"/>
<rect x="644" y="623" width="10" height="1" fill="#9A9A9A"/>
<rect x="654" y="623" width="1" height="3" fill="#555"/>
<rect x="644" y="625" width="11" height="1" fill="#555"/>
<rect x="656" y="624" width="10" height="1" fill="#D0D0D0"/>
<rect x="656" y="624" width="10" height="1" fill="#9A9A9A"/>
<rect x="666" y="624" width="1" height="2" fill="#555"/>
<rect x="656" y="625" width="11" height="1" fill="#555"/>
<rect x="669" y="624" width="10" height="1" fill="#D0D0D0"/>
<rect x="669" y="624" width="10" height="1" fill="#9A9A9A"/>
<rect x="679" y="624" width="1" height="2" fill="#555"/>
<rect x="669" y="625" width="11" height="1" fill="#555"/>
<rect x="693" y="624" width="10" height="1" fill="#D0D0D0"/>
<rect x="693" y="624" width="10" height="1" fill="#9A9A9A"/>
<rect x="703" y="624" width="1" height="2" fill="#555"/>
<rect x="693" y="625" width="11" height="1" fill="#555"/>
<rect x="718" y="624" width="10" height="1" fill="#D0D0D0"/>
<rect x="718" y="624" width="10" height="1" fill="#9A9A9A"/>
<rect x="728" y="624" width="1" height="2" fill="#555"/>
<rect x="718" y="625" width="11" height="1" fill="#555"/>
<rect x="146" y="624" width="5" height="1" fill="#9A9A9A"/><rect x="146" y="625" width="6" height="1" fill="#555"/>
<line x1="145" y1="615.5" x2="736" y2="615.5" stroke="#262626" stroke-dasharray="2,1"/>
<line x1="145" y1="615.5" x2="148" y2="615.5" stroke="#000"/>
<line x1="145" y1="602.5" x2="736" y2="602.5" stroke="#262626" stroke-dasharray="2,1"/>
<line x1="145" y1="602.5" x2="148" y2="602.5" stroke="#000"/>
<line x1="145" y1="588.5" x2="736" y2="588.5" stroke="#262626" stroke-dasharray="2,1"/>
<line x1="145" y1="588.5" x2="148" y2="588.5" stroke="#000"/>
<line x1="145" y1="575.5" x2="736" y2="575.5" stroke="#262626" stroke-dasharray="2,1"/>
<line x1="145" y1="575.5" x2="148" y2="575.5" stroke="#000"/>
<line x1="145" y1="562.5" x2="736" y2="562.5" stroke="#262626" stroke-dasharray="2,1"/>
<line x1="145" y1="562.5" x2="148" y2="562.5" stroke="#000"/>
<line x1="145" y1="548.5" x2="736" y2="548.5" stroke="#262626" stroke-dasharray="2,1"/>
<line x1="145" y1="548.5" x2="148" y2="548.5" stroke="#000"/>
<line x1="145" y1="535.5" x2="736" y2="535.5" stroke="#262626" stroke-dasharray="2,1"/>
<line x1="145" y1="535.5" x2="148" y2="535.5" stroke="#000"/>
<line x1="146.5" y1="531" x2="146.5" y2="628" stroke="#262626" stroke-dasharray="2,1"/>
<line x1="323.5" y1="531" x2="323.5" y2="628" stroke="#262626" stroke-dasharray="2,1"/>
<line x1="500.5" y1="531" x2="500.5" y2="628" stroke="#262626" stroke-dasharray="2,1"/>
<line x1="677.5" y1="531" x2="677.5" y2="628" stroke="#262626" stroke-dasharray="2,1"/>
<rect x="144.5" y="530.5" width="592" height="98" fill="none" stroke="#000"/>
</svg>
<div class="t" style="left:84px;width:60px;text-align:right;top:609px">100</div>
<div class="t" style="left:84px;width:60px;text-align:right;top:596px">200</div>
<div class="t" style="left:84px;width:60px;text-align:right;top:582px">300</div>
<div class="t" style="left:84px;width:60px;text-align:right;top:569px">400</div>
<div class="t" style="left:84px;width:60px;text-align:right;top:556px">500</div>
<div class="t" style="left:84px;width:60px;text-align:right;top:542px">600</div>
<div class="t" style="left:84px;width:60px;text-align:right;top:529px">700</div>
<div class="t" style="left:106px;width:81px;text-align:center;top:630px">-5.000</div>
<div class="t" style="left:283px;width:81px;text-align:center;top:630px">0</div>
<div class="t" style="left:460px;width:81px;text-align:center;top:630px">5.000</div>
<div class="t" style="left:637px;width:81px;text-align:center;top:630px">10.000</div>
<div class="t" style="left:144px;width:592px;text-align:center;top:653px">Velocity (m/s)</div>
<div class="t ttl" style="left:144px;width:592px;text-align:center;top:512px">Channel1 Velocity Histogram</div>
<div class="vt" style="left:68px;top:598px">Counts</div>

<!-- status -->
<div class="t" style="left:4px;top:691px;letter-spacing:-0.3px">Finished Acquisition</div>

</body></html>
